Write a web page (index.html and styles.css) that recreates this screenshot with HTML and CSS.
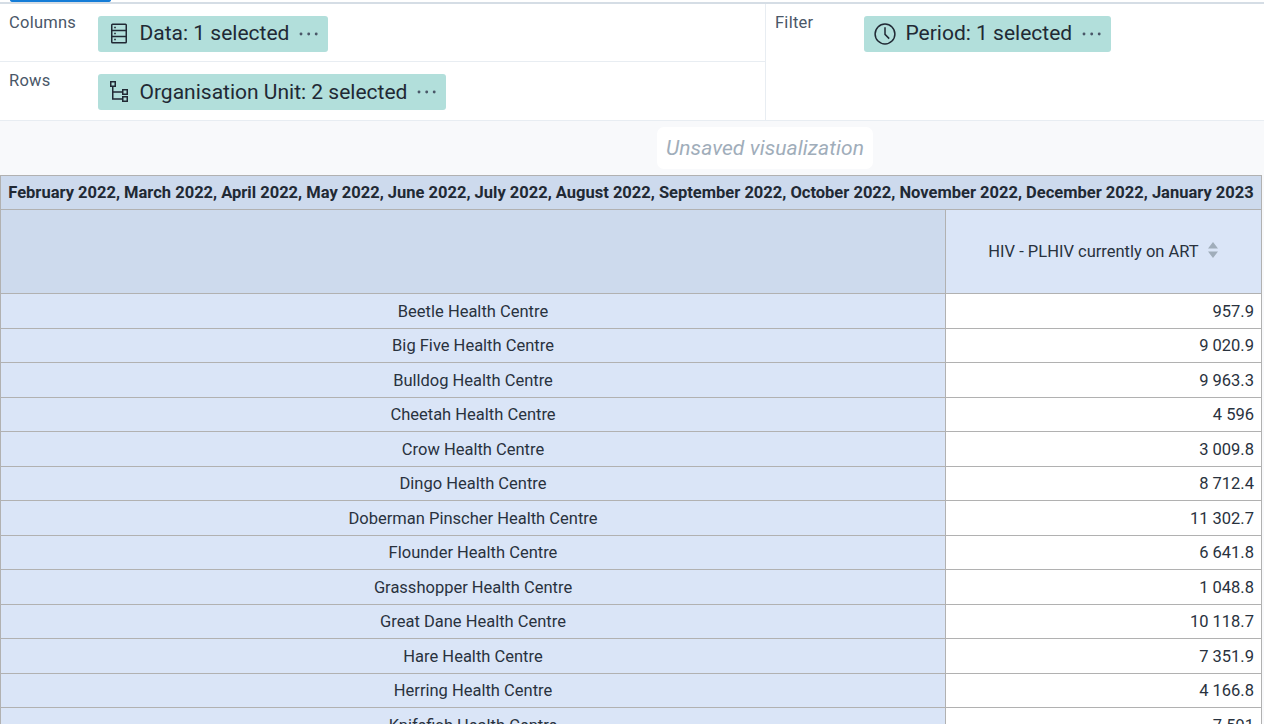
FILE: index.html
```html
<!DOCTYPE html>
<html lang="en">
<head>
<meta charset="utf-8">
<title>Data visualizer</title>
<link rel="stylesheet" href="styles.css">
</head>
<body>
<div class="toolbar"><div class="update-button"></div></div>
<section class="layout">
  <div class="axes">
    <div class="axis axis-columns">
      <span class="axis-label">Columns</span>
      <div class="chip chip-data">
        <svg class="chip-icon" width="24" height="24" viewBox="0 0 24 24" fill="none" stroke="#212934" stroke-width="1.5"><rect x="4.75" y="2.25" width="14.5" height="18.5" rx=".8"/><path d="M4.5 8.5h15M4.5 14.5h15"/><path d="M7.2 5.4h1.6M7.2 11.5h1.6M7.2 17.6h1.6"/></svg>
        <span class="chip-text">Data: 1 selected</span>
        <svg class="dots" width="20" height="4" viewBox="0 0 20 4" fill="#4a5768"><circle cx="2" cy="2" r="1.45"/><circle cx="9.7" cy="2" r="1.45"/><circle cx="17.2" cy="2" r="1.45"/></svg>
      </div>
    </div>
    <div class="axis axis-rows">
      <span class="axis-label">Rows</span>
      <div class="chip chip-unit">
        <svg class="chip-icon" width="24" height="24" viewBox="0 0 24 24" fill="none" stroke="#212934" stroke-width="1.5"><rect x="3.75" y="1.75" width="4.5" height="4.5"/><rect x="15.75" y="9.75" width="4.5" height="4.5"/><rect x="15.75" y="16.75" width="4.5" height="4.5"/><path d="M5.75 6.5v12.4h10M5.75 12h10"/></svg>
        <span class="chip-text">Organisation Unit: 2 selected</span>
        <svg class="dots" width="20" height="4" viewBox="0 0 20 4" fill="#4a5768"><circle cx="2" cy="2" r="1.45"/><circle cx="9.7" cy="2" r="1.45"/><circle cx="17.2" cy="2" r="1.45"/></svg>
      </div>
    </div>
  </div>
  <div class="axis axis-filter">
    <span class="axis-label">Filter</span>
    <div class="chip chip-period">
      <svg class="chip-icon" width="24" height="24" viewBox="0 0 24 24" fill="none" stroke="#212934" stroke-width="1.5"><circle cx="12" cy="12" r="9.9"/><path d="M12 5.2v7.2l4.2 4.2"/></svg>
      <span class="chip-text">Period: 1 selected</span>
      <svg class="dots" width="20" height="4" viewBox="0 0 20 4" fill="#4a5768"><circle cx="2" cy="2" r="1.45"/><circle cx="9.7" cy="2" r="1.45"/><circle cx="17.2" cy="2" r="1.45"/></svg>
    </div>
  </div>
</section>
<div class="title-bar"><div class="title">Unsaved visualization</div></div>
<table class="pivot">
  <colgroup><col class="col-name"><col class="col-value"></colgroup>
  <thead>
    <tr class="period-row"><th colspan="2">February 2022, March 2022, April 2022, May 2022, June 2022, July 2022, August 2022, September 2022, October 2022, November 2022, December 2022, January 2023</th></tr>
    <tr class="header-row"><td class="corner"></td><td class="measure"><div class="measure-inner"><span>HIV - PLHIV currently on ART</span><svg class="sort" width="12" height="18" viewBox="0 0 12 18" fill="#a0adba"><path d="M6 1l5 6.5H1zM1 10.5h10L6 17z"/></svg></div></td></tr>
  </thead>
  <tbody>
    <tr><td>Beetle Health Centre</td><td>957.9</td></tr>
    <tr><td>Big Five Health Centre</td><td>9 020.9</td></tr>
    <tr><td>Bulldog Health Centre</td><td>9 963.3</td></tr>
    <tr><td>Cheetah Health Centre</td><td>4 596</td></tr>
    <tr><td>Crow Health Centre</td><td>3 009.8</td></tr>
    <tr><td>Dingo Health Centre</td><td>8 712.4</td></tr>
    <tr><td>Doberman Pinscher Health Centre</td><td>11 302.7</td></tr>
    <tr><td>Flounder Health Centre</td><td>6 641.8</td></tr>
    <tr><td>Grasshopper Health Centre</td><td>1 048.8</td></tr>
    <tr><td>Great Dane Health Centre</td><td>10 118.7</td></tr>
    <tr><td>Hare Health Centre</td><td>7 351.9</td></tr>
    <tr><td>Herring Health Centre</td><td>4 166.8</td></tr>
    <tr><td>Knifefish Health Centre</td><td>7 591</td></tr>
  </tbody>
</table>
</body>
</html>
```
FILE: styles.css
```css
* { box-sizing: border-box; }
body {
  margin: 0;
  height: 724px;
  overflow: hidden;
  background: #f8f9fb;
  color: #212934;
  font-family: Roboto, sans-serif;
  font-size: 16.5px;
}
.toolbar {
  height: 4px;
  padding-left: 10px;
  background: #fff;
  border-bottom: 2px solid #d5dde5;
}
.update-button {
  width: 101px;
  height: 2px;
  background: #147cd7;
  border-radius: 0 0 3px 3px / 0 0 2px 2px;
}
.layout {
  display: flex;
  height: 117px;
  background: #fff;
  border-bottom: 1px solid #e8edf2;
}
.axes { width: 766px; border-right: 1px solid #e8edf2; }
.axis { display: flex; align-items: flex-start; padding-left: 9px; }
.axis-columns { height: 58px; padding-top: 12px; border-bottom: 1px solid #e8edf2; }
.axis-rows { height: 58px; padding-top: 12px; }
.axis-filter { flex: 1; padding-top: 12px; }
.axis-label {
  width: 89px;
  margin-top: -3px;
  font-size: 16.5px;
  letter-spacing: 0.25px;
  line-height: 20px;
  color: #4a5768;
}
.chip {
  display: flex;
  align-items: center;
  height: 36px;
  padding-left: 9px;
  border-radius: 3px;
  background: #b2dfdb;
}
.chip-data { width: 230px; }
.chip-unit { width: 348px; }
.chip-period { width: 247px; }
.chip-icon { flex: none; }
.chip-text {
  margin: -2px 10px 0 8.5px;
  font-size: 21px;
  line-height: 24px;
  white-space: nowrap;
}
.chip-unit .chip-text { margin-top: 0; }
.dots { flex: none; }
.title-bar {
  display: flex;
  justify-content: center;
  height: 54px;
  padding: 6px 0 0 266px;
}
.title {
  height: 42px;
  padding: 0 9px;
  border-radius: 7px;
  background: #fff;
  color: #a0adba;
  font-size: 21px;
  font-style: italic;
  letter-spacing: 0.09px;
  line-height: 42px;
  white-space: nowrap;
}
.pivot {
  width: 1262px;
  table-layout: fixed;
  border-spacing: 0;
  border-top: 1px solid #b1b1b1;
  border-left: 1px solid #b1b1b1;
}
.col-name { width: 945px; }
.col-value { width: 316px; }
.pivot th, .pivot td {
  padding: 0 7px;
  border-right: 1px solid #b1b1b1;
  border-bottom: 1px solid #b1b1b1;
  line-height: 20px;
  text-align: center;
  white-space: nowrap;
}
.period-row th { height: 34px; background: #cddaed; font-weight: 700; }
.header-row td { height: 84px; }
.header-row .corner { background: #cddaed; }
.header-row .measure { background: #dae5f7; }
.measure-inner { display: flex; align-items: center; justify-content: center; gap: 8px; }
.measure-inner .sort { margin: -3px 0 0; }
.pivot td { color: #29323e; }
.pivot tbody td { height: 34px; background: #dae5f7; }
.pivot tbody tr:nth-child(odd) td { height: 35px; padding-top: 1px; }
.pivot tbody td:last-child { background: #fff; text-align: right; }
```
